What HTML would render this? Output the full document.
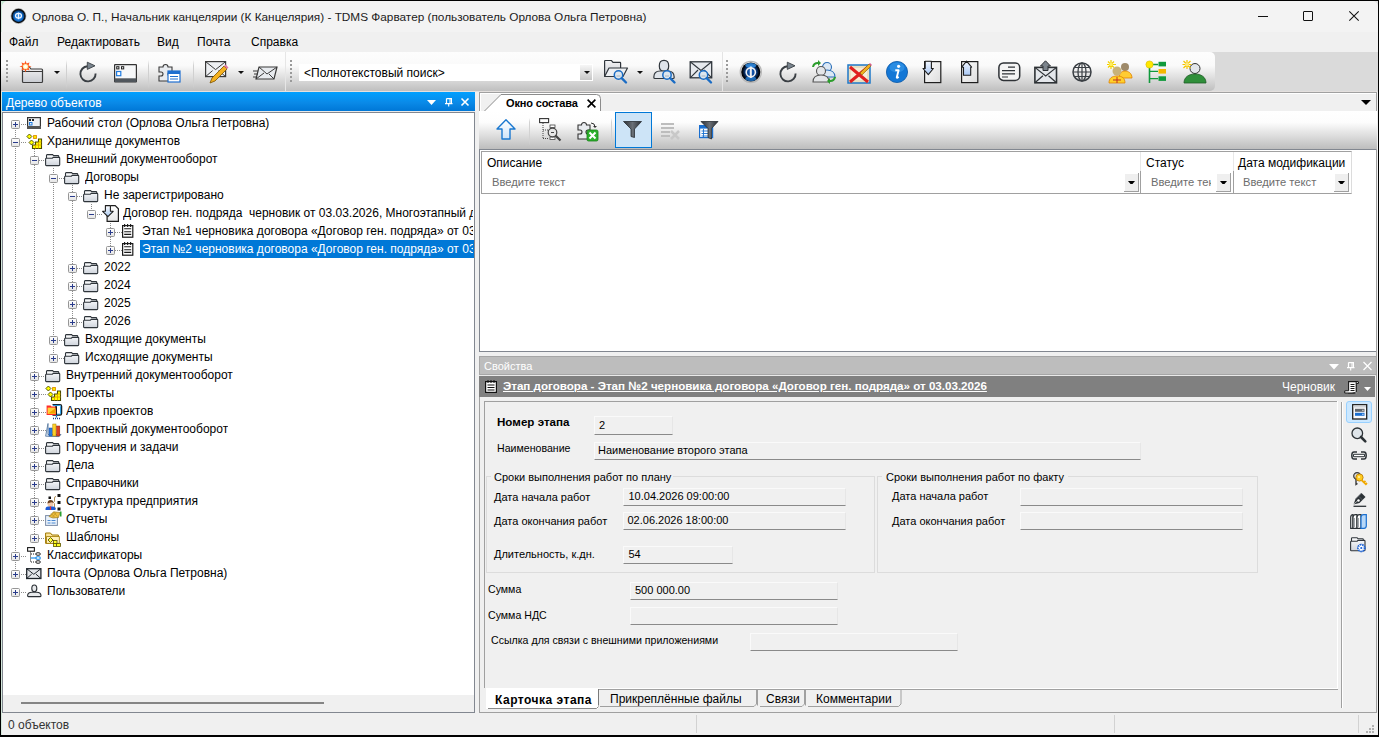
<!DOCTYPE html>
<html><head><meta charset="utf-8"><style>
*{margin:0;padding:0;box-sizing:border-box}
html,body{width:1379px;height:737px;overflow:hidden;background:#000}
body{font-family:"Liberation Sans",sans-serif;font-size:12px;color:#000;position:relative}
.a{position:absolute}
.t{position:absolute;white-space:pre}
svg{position:absolute;overflow:visible}
</style></head><body>
<div class="a" style="left:1px;top:1px;width:1377px;height:734px;background:#e0e0e0"></div>
<div class="a" style="left:1px;top:1px;width:12px;height:12px;background:#c8ead4"></div>
<div class="a" style="left:1px;top:1px;width:1px;height:734px;background:#d5e8dc"></div>
<div class="a" style="left:2px;top:1px;width:1376px;height:734px;background:#f0f0f0;border-radius:6px 6px 0 0"></div>
<div class="a" style="left:2px;top:1px;width:1376px;height:31px;background:#f3f3f3;border-radius:6px 6px 0 0"></div>
<svg style="left:10px;top:8px" width="18" height="18" viewBox="0 0 18 18">
<defs><radialGradient id="gi" cx="50%" cy="55%" r="55%"><stop offset="0" stop-color="#4aa0f0"/><stop offset="0.55" stop-color="#1570d0"/><stop offset="0.85" stop-color="#06305e"/><stop offset="1" stop-color="#000"/></radialGradient></defs>
<circle cx="8.5" cy="8" r="7.4" fill="none" stroke="#a8a8a8" stroke-width="1"/>
<circle cx="8.5" cy="8" r="6.6" fill="url(#gi)" stroke="#0a0a0a" stroke-width="1.2"/>
<ellipse cx="8.5" cy="7.8" rx="3" ry="2.4" fill="none" stroke="#eef4ff" stroke-width="1.2"/>
<line x1="8.5" y1="4.6" x2="8.5" y2="11.2" stroke="#eef4ff" stroke-width="1.2"/>
</svg>
<div class="t" style="left:32px;top:10.10px;font-size:11.8px;line-height:14px;color:#1b1b1b;font-weight:normal;">Орлова О. П., Начальник канцелярии (К Канцелярия) - TDMS Фарватер (пользователь Орлова Ольга Петровна)</div>
<div class="a" style="left:1258px;top:16px;width:10px;height:1px;background:#111"></div>
<div class="a" style="left:1303px;top:11px;width:10px;height:10px;border:1px solid #111;border-radius:1px"></div>
<svg style="left:1349px;top:11px" width="10" height="10" viewBox="0 0 10 10"><path d="M0.3 0.3L9.7 9.7M9.7 0.3L0.3 9.7" stroke="#111" stroke-width="1.05"/></svg>
<div class="a" style="left:1px;top:32px;width:1377px;height:20px;background:#f0f0f0"></div>
<div class="t" style="left:9px;top:34.53px;font-size:12px;line-height:14px;color:#000;font-weight:normal;">Файл</div>
<div class="t" style="left:57px;top:34.53px;font-size:12px;line-height:14px;color:#000;font-weight:normal;">Редактировать</div>
<div class="t" style="left:157px;top:34.53px;font-size:12px;line-height:14px;color:#000;font-weight:normal;">Вид</div>
<div class="t" style="left:197px;top:34.53px;font-size:12px;line-height:14px;color:#000;font-weight:normal;">Почта</div>
<div class="t" style="left:251px;top:34.53px;font-size:12px;line-height:14px;color:#000;font-weight:normal;">Справка</div>
<div class="a" style="left:1px;top:52px;width:1377px;height:40px;background:#dadada"></div>
<div class="a" style="left:1px;top:52px;width:285px;height:39px;background:linear-gradient(#fdfdfd 0%,#fafafa 35%,#e2e2e2 62%,#bfbfbf 100%)"></div>
<div class="a" style="left:285px;top:52px;width:1px;height:39px;background:#e6e6e6"></div>
<div class="a" style="left:286px;top:52px;width:436px;height:39px;background:linear-gradient(#fdfdfd 0%,#fafafa 35%,#e2e2e2 62%,#bfbfbf 100%)"></div>
<div class="a" style="left:722px;top:52px;width:1px;height:39px;background:#e4e4e4"></div>
<div class="a" style="left:723px;top:52px;width:492px;height:39px;background:linear-gradient(#fdfdfd 0%,#fafafa 35%,#e2e2e2 62%,#bfbfbf 100%);border-radius:0 5px 5px 0"></div>
<div class="a" style="left:1px;top:91px;width:1377px;height:1px;background:#e4e0de"></div>
<div class="a" style="left:6px;top:60px;width:2px;height:2px;background:#9a9a9a"></div>
<div class="a" style="left:6px;top:64px;width:2px;height:2px;background:#9a9a9a"></div>
<div class="a" style="left:6px;top:68px;width:2px;height:2px;background:#9a9a9a"></div>
<div class="a" style="left:6px;top:72px;width:2px;height:2px;background:#9a9a9a"></div>
<div class="a" style="left:6px;top:76px;width:2px;height:2px;background:#9a9a9a"></div>
<div class="a" style="left:6px;top:80px;width:2px;height:2px;background:#9a9a9a"></div>
<div class="a" style="left:290px;top:60px;width:2px;height:2px;background:#9a9a9a"></div>
<div class="a" style="left:290px;top:64px;width:2px;height:2px;background:#9a9a9a"></div>
<div class="a" style="left:290px;top:68px;width:2px;height:2px;background:#9a9a9a"></div>
<div class="a" style="left:290px;top:72px;width:2px;height:2px;background:#9a9a9a"></div>
<div class="a" style="left:290px;top:76px;width:2px;height:2px;background:#9a9a9a"></div>
<div class="a" style="left:290px;top:80px;width:2px;height:2px;background:#9a9a9a"></div>
<div class="a" style="left:726px;top:60px;width:2px;height:2px;background:#9a9a9a"></div>
<div class="a" style="left:726px;top:64px;width:2px;height:2px;background:#9a9a9a"></div>
<div class="a" style="left:726px;top:68px;width:2px;height:2px;background:#9a9a9a"></div>
<div class="a" style="left:726px;top:72px;width:2px;height:2px;background:#9a9a9a"></div>
<div class="a" style="left:726px;top:76px;width:2px;height:2px;background:#9a9a9a"></div>
<div class="a" style="left:726px;top:80px;width:2px;height:2px;background:#9a9a9a"></div>
<div class="a" style="left:66px;top:60px;width:1px;height:29px;background:linear-gradient(rgba(0,0,0,0),#d0d0d0 20%,#d0d0d0 80%,rgba(0,0,0,0))"></div>
<div class="a" style="left:148px;top:60px;width:1px;height:29px;background:linear-gradient(rgba(0,0,0,0),#d0d0d0 20%,#d0d0d0 80%,rgba(0,0,0,0))"></div>
<div class="a" style="left:193px;top:60px;width:1px;height:29px;background:linear-gradient(rgba(0,0,0,0),#d0d0d0 20%,#d0d0d0 80%,rgba(0,0,0,0))"></div>
<svg style="left:54px;top:71px" width="6" height="3" viewBox="0 0 6 3"><path d="M0 0H6L3 3Z" fill="#111"/></svg>
<svg style="left:238px;top:71px" width="6" height="3" viewBox="0 0 6 3"><path d="M0 0H6L3 3Z" fill="#111"/></svg>
<svg style="left:637px;top:71px" width="6" height="3" viewBox="0 0 6 3"><path d="M0 0H6L3 3Z" fill="#111"/></svg>
<div class="a" style="left:299px;top:64px;width:294px;height:17px;background:#fff"></div>
<div class="a" style="left:580px;top:65px;width:12px;height:15px;background:linear-gradient(#f6f6f6,#c6c6c6)"></div>
<svg style="left:584px;top:71px" width="6" height="3" viewBox="0 0 6 3"><path d="M0 0H6L3 3Z" fill="#111"/></svg>
<div class="t" style="left:304px;top:66.03px;font-size:12px;line-height:14px;color:#000;font-weight:normal;">&lt;Полнотекстовый поиск&gt;</div>
<svg style="left:0;top:0" width="1" height="1"><defs><linearGradient id="fg" x1="0" y1="0" x2="0" y2="1"><stop offset="0" stop-color="#f4f4f6"/><stop offset="1" stop-color="#c9ccd2"/></linearGradient><linearGradient id="bl" x1="0" y1="0" x2="0" y2="1"><stop offset="0" stop-color="#ffffff"/><stop offset="1" stop-color="#bcd8f5"/></linearGradient></defs></svg>
<svg style="left:19px;top:60px" width="25" height="24" viewBox="0 0 25 24"><path d="M3.5 10.5V21.5Q3.5 22.5 4.5 22.5H22.5Q23.5 22.5 23.5 21.5V10Q23.5 9 22.5 9H12L10 6.5H5Q3.5 6.5 3.5 8z" fill="url(#fg)" stroke="#3c3c3c" stroke-width="1.2"/><path d="M3.5 11.5H23.5" stroke="#3c3c3c" stroke-width="1"/><path d="M6.5 0.5L7.5 3.5 10.5 2.5 9.5 5.5 12.5 6.5 9.5 7.5 10.5 10.5 7.5 9.5 6.5 12.5 5.5 9.5 2.5 10.5 3.5 7.5 0.5 6.5 3.5 5.5 2.5 2.5 5.5 3.5z" fill="#ff5a1e"/><circle cx="6.5" cy="6.5" r="2.6" fill="#fff2b0"/><circle cx="6.5" cy="6.5" r="1.5" fill="#fff"/></svg>
<svg style="left:79px;top:61px" width="19" height="22" viewBox="0 0 19 22"><path d="M16.6 12.5A7.6 7.6 0 1 1 8.5 5.2" fill="none" stroke="#3a3f44" stroke-width="1.9"/><path d="M8.3 1.2L16 4.8L8.3 8.4Z" fill="#7a858f" stroke="#3a3f44" stroke-width="0.9" stroke-linejoin="round"/></svg>
<svg style="left:114px;top:64px" width="23" height="19" viewBox="0 0 23 19"><rect x="0.6" y="0.6" width="21.8" height="17.4" rx="0.5" fill="#f6f7f8" stroke="#333" stroke-width="1.2"/><rect x="0.6" y="14.3" width="21.8" height="3.7" fill="#50565c"/><rect x="2.7" y="2.7" width="2.2" height="2.2" fill="none" stroke="#222" stroke-width="1"/><rect x="7.5" y="2.7" width="2.2" height="2.2" fill="none" stroke="#222" stroke-width="1"/><rect x="2.6" y="7.5" width="4.2" height="4.2" fill="#fff" stroke="#1e7be0" stroke-width="1.2"/></svg>
<svg style="left:158px;top:60px" width="23" height="23" viewBox="0 0 23 23"><path d="M1 7h4a2.5 2.5 0 1 1 5 0h4v5h-2a2 2 0 1 0 0 4h2v5H1v-5h2a2 2 0 1 0 0-4H1z" fill="#e8ebef" stroke="#3a3a3a" stroke-width="1.1"/><rect x="10" y="11" width="12" height="11" fill="#fff" stroke="#1e6fd0" stroke-width="1.2"/><rect x="10" y="11" width="12" height="3" fill="#1e6fd0"/><path d="M12 16.5h8M12 19h8" stroke="#1e6fd0" stroke-width="1"/></svg>
<svg style="left:205px;top:61px" width="24" height="23" viewBox="0 0 24 23"><rect x="0.6" y="0.6" width="20" height="15" fill="#eef0f3" stroke="#3a3a3a" stroke-width="1.2"/><path d="M0.6 0.6l10 8 10-8M0.6 15.6l7-6M20.6 15.6l-7-6" fill="none" stroke="#3a3a3a" stroke-width="1"/><path d="M5 22l2-5 12-12 3 3-12 12z" fill="#f5b120" stroke="#7a5200" stroke-width="0.8"/><path d="M19 5l3 3 1.5-1.5-3-3z" fill="#e07aa0"/></svg>
<svg style="left:253px;top:66px" width="25" height="14" viewBox="0 0 25 14"><path d="M6 1h18l-3 12H3z" fill="#e8ebef" stroke="#3a3a3a" stroke-width="1.2"/><path d="M6 1l8 7 10-7M3 13l8-6M21 13l-5-5" fill="none" stroke="#3a3a3a" stroke-width="1"/><path d="M0 5h5M1 8h4M0 11h4" stroke="#3a3a3a" stroke-width="1"/></svg>
<svg style="left:603px;top:59px" width="26" height="26" viewBox="0 0 26 26"><path d="M1.6 17.5V2.2Q1.6 1.5 2.3 1.5H8.5L10 3.3H17Q17.6 3.3 17.6 4V9" fill="url(#fg)" stroke="#30363c" stroke-width="1.2"/><path d="M1.6 17.5L6 9H24.5L20 17.5Z" fill="#eef0f3" stroke="#30363c" stroke-width="1.2" stroke-linejoin="round"/><circle cx="15.5" cy="16" r="4.2" fill="#dde6ee" stroke="#1a6cc4" stroke-width="1.5"/><path d="M13.5 17h4" stroke="#9aa6b0" stroke-width="0.8"/><path d="M18.7 19.2L23.0 23.5" stroke="#1a6cc4" stroke-width="2.4" stroke-linecap="round"/></svg>
<svg style="left:653px;top:59px" width="25" height="26" viewBox="0 0 25 26"><path d="M6.3 7Q6.3 1.3 11 1.3T15.7 7Q15.7 12.3 11 12.3T6.3 7Z" fill="#dfe4ea" stroke="#30363c" stroke-width="1.2"/><path d="M0.8 18.2Q0.8 12 7 12H15Q21.2 12 21.2 18.2Q21.2 19.5 20 19.5H2Q0.8 19.5 0.8 18.2Z" fill="#dfe4ea" stroke="#30363c" stroke-width="1.2"/><circle cx="14" cy="16" r="4.2" fill="#dde6ee" stroke="#1a6cc4" stroke-width="1.5"/><path d="M12 17h4" stroke="#9aa6b0" stroke-width="0.8"/><path d="M17.2 19.2L21.5 23.5" stroke="#1a6cc4" stroke-width="2.4" stroke-linecap="round"/></svg>
<svg style="left:689px;top:59px" width="26" height="26" viewBox="0 0 26 26"><rect x="1.2" y="2.8" width="21.5" height="16" fill="#e6e9ed" stroke="#30363c" stroke-width="1.3"/><path d="M1.2 2.8L12 11.5 22.7 2.8M1.2 18.8L9 11M22.7 18.8L15 11" fill="none" stroke="#30363c" stroke-width="1.1"/><circle cx="14.5" cy="16" r="4.2" fill="#dde6ee" stroke="#1a6cc4" stroke-width="1.5"/><path d="M12.5 17h4" stroke="#9aa6b0" stroke-width="0.8"/><path d="M17.7 19.2L22.0 23.5" stroke="#1a6cc4" stroke-width="2.4" stroke-linecap="round"/></svg>
<svg style="left:739px;top:60px" width="24" height="24" viewBox="0 0 24 24"><defs><radialGradient id="phg" cx="50%" cy="50%" r="50%"><stop offset="0" stop-color="#1560c0"/><stop offset="0.55" stop-color="#0a3f88"/><stop offset="0.85" stop-color="#010814"/><stop offset="1" stop-color="#000"/></radialGradient></defs><circle cx="11.8" cy="12" r="10.6" fill="none" stroke="#b8b8b8" stroke-width="1.2"/><circle cx="11.8" cy="12" r="9.6" fill="url(#phg)"/><ellipse cx="11.8" cy="5.5" rx="5.5" ry="2.6" fill="#3aa0ff" opacity="0.75"/><ellipse cx="11.8" cy="18.8" rx="5.5" ry="2.4" fill="#2a8ae8" opacity="0.7"/><ellipse cx="11.8" cy="12.3" rx="4.6" ry="4.4" fill="none" stroke="#f0f0f0" stroke-width="1.6"/><path d="M11.8 6.5v11.5" stroke="#f0f0f0" stroke-width="2"/></svg>
<svg style="left:779px;top:61px" width="19" height="22" viewBox="0 0 19 22"><path d="M16.6 12.5A7.6 7.6 0 1 1 8.5 5.2" fill="none" stroke="#3a3f44" stroke-width="1.9"/><path d="M8.3 1.2L16 4.8L8.3 8.4Z" fill="#7a858f" stroke="#3a3f44" stroke-width="0.9" stroke-linejoin="round"/></svg>
<svg style="left:811px;top:60px" width="26" height="24" viewBox="0 0 26 24"><circle cx="16" cy="7" r="4.5" fill="#dbe8f5" stroke="#2a6fb8" stroke-width="1.1"/><path d="M9 17c0-5 3-7 7-7s8 2 8 7z" fill="#dbe8f5" stroke="#2a6fb8" stroke-width="1.1"/><circle cx="10" cy="11" r="4.5" fill="#e4e6e8" stroke="#555" stroke-width="1.1"/><path d="M2 22c0-5 3-7 8-7s8 2 8 7z" fill="#e4e6e8" stroke="#555" stroke-width="1.1"/><path d="M1 7a6 6 0 0 1 6-5v-2l3 3-3 3V4a4 4 0 0 0-4 3z" fill="#2c9d2c"/><path d="M25 17a6 6 0 0 1-6 5v2l-3-3 3-3v2a4 4 0 0 0 4-3z" fill="#2c9d2c"/></svg>
<svg style="left:848px;top:61px" width="24" height="23" viewBox="0 0 24 23"><rect x="0" y="4" width="22" height="18" fill="#e9dfc2" stroke="#1e78c8" stroke-width="1.5"/><rect x="3" y="7" width="16" height="12" fill="#f5eed8"/><path d="M2 6l18 15M20 6L2 21" stroke="#e02020" stroke-width="3"/><path d="M12 12l9-9 2 2-9 9z" fill="#f0b020" stroke="#8a6000" stroke-width="0.6"/><path d="M21 3l2 2 1-1-2-2z" fill="#d85a8a"/></svg>
<svg style="left:886px;top:60px" width="23" height="24" viewBox="0 0 23 24"><circle cx="11" cy="12" r="10.6" fill="#1377d6" stroke="#0d5aa8" stroke-width="0.8"/><ellipse cx="11" cy="7.5" rx="7.5" ry="5" fill="#4aa8f5" opacity="0.45"/><circle cx="12.6" cy="6.3" r="1.6" fill="#fff"/><path d="M9.3 10.2H12.6L10.8 17.2Q10.6 18 11.5 17.6L12.8 17" fill="none" stroke="#fff" stroke-width="1.9" stroke-linejoin="round"/></svg>
<svg style="left:922px;top:60px" width="20" height="24" viewBox="0 0 20 24"><defs><linearGradient id="dg" x1="0" y1="0" x2="1" y2="1"><stop offset="0" stop-color="#fff"/><stop offset="1" stop-color="#dcdcdc"/></linearGradient><linearGradient id="ag" x1="0" y1="0" x2="0" y2="1"><stop offset="0" stop-color="#f4f8ff"/><stop offset="1" stop-color="#a9c8f5"/></linearGradient></defs><rect x="2.6" y="1.6" width="16.2" height="21" fill="url(#dg)" stroke="#1e1e1e" stroke-width="1.2"/><path d="M3.2 1.2H9.4V8.5H11.4L6.3 14.6 1 8.5H3.2Z" fill="url(#ag)" stroke="#1e1e1e" stroke-width="1.1" stroke-linejoin="round"/></svg>
<svg style="left:960px;top:60px" width="20" height="24" viewBox="0 0 20 24"><rect x="1.6" y="1.6" width="16.2" height="21" fill="url(#dg)" stroke="#1e1e1e" stroke-width="1.2"/><path d="M3.5 15.3V7.2H1.6L6.6 1.2 11.6 7.2H10.7V15.3Z" fill="url(#ag)" stroke="#1e1e1e" stroke-width="1.1" stroke-linejoin="round"/></svg>
<svg style="left:998px;top:62px" width="22" height="20" viewBox="0 0 22 20"><rect x="0.9" y="1" width="20.8" height="17.4" rx="4.5" fill="#f4f4f4" stroke="#2e3236" stroke-width="1.5"/><path d="M10 5.2h7M4 8.7h13M4 11.8h13M4 15h6" stroke="#2e3236" stroke-width="1.2"/></svg>
<svg style="left:1034px;top:60px" width="24" height="24" viewBox="0 0 24 24"><rect x="0.9" y="7.4" width="21.6" height="15.4" fill="#e4e7eb" stroke="#2e3236" stroke-width="1.6"/><path d="M0.9 7.4l10.8 8.6 10.8-8.6M0.9 22.8l8-7M22.5 22.8l-8-7" fill="none" stroke="#2e3236" stroke-width="1.2"/><path d="M9 10.5V6H6.5L11.5 0.8 16.5 6H14V10.5Z" fill="#7c848c" stroke="#2e3236" stroke-width="1" stroke-linejoin="round"/></svg>
<svg style="left:1072px;top:62px" width="21" height="20" viewBox="0 0 21 20"><circle cx="10" cy="10" r="9" fill="none" stroke="#3a3f44" stroke-width="1.5"/><ellipse cx="10" cy="10" rx="4" ry="9" fill="none" stroke="#3a3f44" stroke-width="1.3"/><path d="M1 10h18M2.5 5.5h15M2.5 14.5h15M10 1v18" stroke="#3a3f44" stroke-width="1.2"/></svg>
<svg style="left:1107px;top:60px" width="26" height="24" viewBox="0 0 26 24"><circle cx="18" cy="7" r="4" fill="#9e8a6a"/><path d="M12 18c0-5 3-7 6-7s7 2 7 7z" fill="#ffcc33" stroke="#e08000" stroke-width="0.8"/><circle cx="10" cy="11" r="4.5" fill="#c8b27a"/><path d="M2 23c0-5 3-7 8-7s8 2 8 7z" fill="#ffd02a" stroke="#e08000" stroke-width="0.8"/><path d="M4 0v9M0 4.5h9M1 1.5l6 6M7 1.5l-6 6" stroke="#f3d000" stroke-width="1.2"/><circle cx="4" cy="4.5" r="1.8" fill="#ffee60"/><path d="M10 17v6M6 20h8" stroke="#c03020" stroke-width="1"/></svg>
<svg style="left:1145px;top:60px" width="22" height="24" viewBox="0 0 22 24"><path d="M4.5 4.5V23" stroke="#119a3c" stroke-width="1.6"/><path d="M4.5 4.5H13M4.5 11.3H13M4.5 18.6H13" stroke="#119a3c" stroke-width="1.3"/><circle cx="4.5" cy="4.5" r="3.6" fill="#ffe800" stroke="#d8b800" stroke-width="0.6"/><rect x="13.5" y="1.8" width="7.5" height="4.6" fill="#119a3c"/><rect x="13.5" y="9" width="7.5" height="4.6" fill="#f5b800"/><rect x="13.5" y="16.3" width="7.5" height="4.6" fill="#119a3c"/></svg>
<svg style="left:1182px;top:60px" width="25" height="24" viewBox="0 0 25 24"><circle cx="13" cy="8.5" r="5" fill="#e2e6ea" stroke="#333" stroke-width="1"/><path d="M2 23c0-6 5-9 11-9s11 3 11 9z" fill="#2f8f3a" stroke="#1d5a24" stroke-width="0.8"/><path d="M5 0v9M0.5 4.5h9M1.5 1l7 7M8.5 1l-7 7" stroke="#f3c400" stroke-width="1.2"/><circle cx="5" cy="4.5" r="2" fill="#ffe97a"/></svg>
<div class="t" style="left:8px;top:717.73px;font-size:12px;line-height:14px;color:#333;font-weight:normal;">0 объектов</div>
<div class="a" style="left:0px;top:735px;width:1379px;height:2px;background:#000"></div>
<div class="a" style="left:2px;top:92px;width:473px;height:19px;background:linear-gradient(#00a0ff,#0a8ae8 55%,#0077d6)"></div>
<div class="a" style="left:2px;top:111px;width:473px;height:1px;background:#e9e9e9"></div>
<div class="t" style="left:6px;top:96.03px;font-size:12px;line-height:14px;color:#fff;font-weight:normal;">Дерево объектов</div>
<svg style="left:427px;top:100px" width="9" height="5" viewBox="0 0 9 5"><path d="M0 0H9L4.5 5Z" fill="#fff"/></svg>
<svg style="left:445px;top:98px" width="8" height="9" viewBox="0 0 8 9"><path d="M1.5 0.6H6.4V5M1.5 0.6V5" stroke="#fff" stroke-width="1.2" fill="none"/><path d="M5 0.6V5" stroke="#fff" stroke-width="1" fill="none"/><path d="M0 5.6H7.5M3.7 5.6V8.5" stroke="#fff" stroke-width="1.1" fill="none"/></svg>
<svg style="left:461px;top:98px" width="8" height="8" viewBox="0 0 8 8"><path d="M0.5 0.5L7.5 7.5M7.5 0.5L0.5 7.5" stroke="#fff" stroke-width="1.6"/></svg>
<div class="a" style="left:2px;top:112px;width:473px;height:601px;background:#fff;border:1px solid #828790"></div>
<div class="a" style="left:3px;top:695px;width:471px;height:17px;background:#f0f0f0"></div>
<div class="a" style="left:21px;top:702px;width:303px;height:2px;background:#858585"></div>
<svg style="left:0;top:0" width="1379" height="737"><g stroke="#8c8c8c" stroke-width="1" stroke-dasharray="1 1" fill="none"><path d="M15.5 130V574"/><path d="M34.5 149V538"/><path d="M53.5 168V358"/><path d="M72.5 185V322"/><path d="M91.5 204V214"/><path d="M110.5 221V250"/><path d="M21 124.5H27"/><path d="M21 142.5H27"/><path d="M39 160.5H46"/><path d="M59 178.5H65"/><path d="M77 196.5H84"/><path d="M97 214.5H103"/><path d="M115 232.5H122"/><path d="M115 250.5H122"/><path d="M77 268.5H84"/><path d="M77 286.5H84"/><path d="M77 304.5H84"/><path d="M77 322.5H84"/><path d="M59 340.5H65"/><path d="M59 358.5H65"/><path d="M39 376.5H46"/><path d="M39 394.5H46"/><path d="M39 412.5H46"/><path d="M39 430.5H46"/><path d="M39 448.5H46"/><path d="M39 466.5H46"/><path d="M39 484.5H46"/><path d="M39 502.5H46"/><path d="M39 520.5H46"/><path d="M39 538.5H46"/><path d="M21 556.5H27"/><path d="M21 574.5H27"/><path d="M21 592.5H27"/></g></svg>
<svg style="left:0;top:0" width="1" height="1"><defs><linearGradient id="tfg" x1="0" y1="0" x2="0" y2="1"><stop offset="0" stop-color="#f4f6f9"/><stop offset="1" stop-color="#cfd4dc"/></linearGradient></defs></svg>
<svg style="left:11px;top:120px" width="9" height="9" viewBox="0 0 9 9"><defs></defs><rect x="0.5" y="0.5" width="8" height="8" fill="url(#exg)" stroke="#969696" rx="1"/><path d="M2 4.5h5" stroke="#2a3c8c" stroke-width="1"/><path d="M4.5 2v5" stroke="#2a3c8c" stroke-width="1"/></svg>
<svg style="left:27px;top:117px" width="14" height="12" viewBox="0 0 14 12"><rect x="0.6" y="0.6" width="12.8" height="10.8" fill="#eef0f3" stroke="#333" stroke-width="1.2"/><rect x="0" y="9" width="14" height="3" fill="#555"/><rect x="2" y="2" width="2" height="2" fill="#222"/><rect x="5" y="2" width="2" height="2" fill="#222"/><rect x="2.5" y="5.5" width="2.5" height="2.5" fill="none" stroke="#1e7be0" stroke-width="1"/></svg>
<div class="t" style="left:47px;top:116.23px;font-size:12px;line-height:14px;color:#000;font-weight:normal;max-width:426px;overflow:hidden">Рабочий стол (Орлова Ольга Петровна)</div>
<svg style="left:11px;top:138px" width="9" height="9" viewBox="0 0 9 9"><defs></defs><rect x="0.5" y="0.5" width="8" height="8" fill="url(#exg)" stroke="#969696" rx="1"/><path d="M2 4.5h5" stroke="#2a3c8c" stroke-width="1"/></svg>
<svg style="left:24px;top:132px" width="20" height="18" viewBox="0 0 20 18"><path d="M8.5 16.5V13H11.5V10H14.5V7H17.5V16.5Z" fill="#ffff00" stroke="#4a4a00" stroke-width="1.1"/><path d="M11.5 13V16.5M14.5 10V16.5M11.5 13H17.5M14.5 10H17.5" stroke="#e0a000" stroke-width="0.9"/><path d="M5.4 2L7.9 4.5 5.4 7 2.9 4.5Z" fill="#ffff00" stroke="#4a4a00" stroke-width="0.9"/><path d="M7.5 8L10 10.5 7.5 13 5 10.5Z" fill="#ffff00" stroke="#4a4a00" stroke-width="0.9"/><rect x="9.6" y="3.6" width="2.8" height="2.8" fill="#ffff00" stroke="#e09000" stroke-width="1"/></svg>
<div class="t" style="left:47px;top:134.23px;font-size:12px;line-height:14px;color:#000;font-weight:normal;max-width:426px;overflow:hidden">Хранилище документов</div>
<svg style="left:30px;top:156px" width="9" height="9" viewBox="0 0 9 9"><defs></defs><rect x="0.5" y="0.5" width="8" height="8" fill="url(#exg)" stroke="#969696" rx="1"/><path d="M2 4.5h5" stroke="#2a3c8c" stroke-width="1"/></svg>
<svg style="left:45px;top:154px" width="16" height="13" viewBox="0 0 16 13"><path d="M1.5 4V1.3Q1.5 0.6 2.2 0.6H7.6L8.6 1.6H13Q13.7 1.6 13.7 2.3V4" fill="#f6f7f9" stroke="#2f353b" stroke-width="1.1"/><path d="M0.6 10.8V5Q0.6 4.2 1.4 4.2H7.4L8.2 3.4H14Q14.7 3.4 14.7 4.1V10.8Q14.7 11.6 13.9 11.6H1.4Q0.6 11.6 0.6 10.8Z" fill="url(#tfg)" stroke="#2f353b" stroke-width="1.1"/></svg>
<div class="t" style="left:66px;top:152.23px;font-size:12px;line-height:14px;color:#000;font-weight:normal;max-width:407px;overflow:hidden">Внешний документооборот</div>
<svg style="left:49px;top:174px" width="9" height="9" viewBox="0 0 9 9"><defs></defs><rect x="0.5" y="0.5" width="8" height="8" fill="url(#exg)" stroke="#969696" rx="1"/><path d="M2 4.5h5" stroke="#2a3c8c" stroke-width="1"/></svg>
<svg style="left:64px;top:172px" width="16" height="13" viewBox="0 0 16 13"><path d="M1.5 4V1.3Q1.5 0.6 2.2 0.6H7.6L8.6 1.6H13Q13.7 1.6 13.7 2.3V4" fill="#f6f7f9" stroke="#2f353b" stroke-width="1.1"/><path d="M0.6 10.8V5Q0.6 4.2 1.4 4.2H7.4L8.2 3.4H14Q14.7 3.4 14.7 4.1V10.8Q14.7 11.6 13.9 11.6H1.4Q0.6 11.6 0.6 10.8Z" fill="url(#tfg)" stroke="#2f353b" stroke-width="1.1"/></svg>
<div class="t" style="left:85px;top:170.23px;font-size:12px;line-height:14px;color:#000;font-weight:normal;max-width:388px;overflow:hidden">Договоры</div>
<svg style="left:68px;top:192px" width="9" height="9" viewBox="0 0 9 9"><defs></defs><rect x="0.5" y="0.5" width="8" height="8" fill="url(#exg)" stroke="#969696" rx="1"/><path d="M2 4.5h5" stroke="#2a3c8c" stroke-width="1"/></svg>
<svg style="left:83px;top:190px" width="16" height="13" viewBox="0 0 16 13"><path d="M1.5 4V1.3Q1.5 0.6 2.2 0.6H7.6L8.6 1.6H13Q13.7 1.6 13.7 2.3V4" fill="#f6f7f9" stroke="#2f353b" stroke-width="1.1"/><path d="M0.6 10.8V5Q0.6 4.2 1.4 4.2H7.4L8.2 3.4H14Q14.7 3.4 14.7 4.1V10.8Q14.7 11.6 13.9 11.6H1.4Q0.6 11.6 0.6 10.8Z" fill="url(#tfg)" stroke="#2f353b" stroke-width="1.1"/></svg>
<div class="t" style="left:104px;top:188.23px;font-size:12px;line-height:14px;color:#000;font-weight:normal;max-width:369px;overflow:hidden">Не зарегистрировано</div>
<svg style="left:87px;top:210px" width="9" height="9" viewBox="0 0 9 9"><defs></defs><rect x="0.5" y="0.5" width="8" height="8" fill="url(#exg)" stroke="#969696" rx="1"/><path d="M2 4.5h5" stroke="#2a3c8c" stroke-width="1"/></svg>
<svg style="left:102px;top:205px" width="18" height="18" viewBox="0 0 18 18"><defs><linearGradient id="dd1" x1="0" y1="0" x2="0" y2="1"><stop offset="0" stop-color="#fff"/><stop offset="1" stop-color="#e6e6e6"/></linearGradient><linearGradient id="dd2" x1="0" y1="0" x2="0" y2="1"><stop offset="0" stop-color="#fff"/><stop offset="1" stop-color="#a8c8f0"/></linearGradient></defs><path d="M8.5 0.6H13.2L16.4 3.8V16.4H5.1V7" fill="url(#dd1)" stroke="#1e1e1e" stroke-width="1.2"/><path d="M3.4 0.6H8.4V6.3H11.2L5.9 11.6 0.6 6.3H3.4Z" fill="url(#dd2)" stroke="#1e1e1e" stroke-width="1.1" stroke-linejoin="round"/></svg>
<div class="t" style="left:123px;top:206.23px;font-size:12px;line-height:14px;color:#000;font-weight:normal;max-width:350px;overflow:hidden">Договор ген. подряда  черновик от 03.03.2026, Многоэтапный договор</div>
<svg style="left:106px;top:228px" width="9" height="9" viewBox="0 0 9 9"><defs></defs><rect x="0.5" y="0.5" width="8" height="8" fill="url(#exg)" stroke="#969696" rx="1"/><path d="M2 4.5h5" stroke="#2a3c8c" stroke-width="1"/><path d="M4.5 2v5" stroke="#2a3c8c" stroke-width="1"/></svg>
<svg style="left:122px;top:224px" width="12" height="14" viewBox="0 0 12 14"><rect x="0.6" y="1.6" width="10.2" height="11.6" fill="#fff" stroke="#1a1a1a" stroke-width="1.2"/><path d="M2.6 0v3M5.6 0v3M8.6 0v3" stroke="#1a1a1a" stroke-width="1.1"/><path d="M2.2 4.7h7M2.2 7.7h7M2.2 10.4h7" stroke="#1a1a1a" stroke-width="1.1"/></svg>
<div class="t" style="left:142px;top:224.23px;font-size:12px;line-height:14px;color:#000;font-weight:normal;max-width:331px;overflow:hidden">Этап №1 черновика договора «Договор ген. подряда» от 03.03.2026</div>
<svg style="left:106px;top:246px" width="9" height="9" viewBox="0 0 9 9"><defs></defs><rect x="0.5" y="0.5" width="8" height="8" fill="url(#exg)" stroke="#969696" rx="1"/><path d="M2 4.5h5" stroke="#2a3c8c" stroke-width="1"/><path d="M4.5 2v5" stroke="#2a3c8c" stroke-width="1"/></svg>
<svg style="left:122px;top:242px" width="12" height="14" viewBox="0 0 12 14"><rect x="0.6" y="1.6" width="10.2" height="11.6" fill="#fff" stroke="#1a1a1a" stroke-width="1.2"/><path d="M2.6 0v3M5.6 0v3M8.6 0v3" stroke="#1a1a1a" stroke-width="1.1"/><path d="M2.2 4.7h7M2.2 7.7h7M2.2 10.4h7" stroke="#1a1a1a" stroke-width="1.1"/></svg>
<div class="a" style="left:140px;top:240px;width:334px;height:18px;background:#0078d7"></div>
<div class="t" style="left:142px;top:242.23px;font-size:12px;line-height:14px;color:#fff;font-weight:normal;max-width:331px;overflow:hidden">Этап №2 черновика договора «Договор ген. подряда» от 03.03.2026</div>
<svg style="left:68px;top:264px" width="9" height="9" viewBox="0 0 9 9"><defs></defs><rect x="0.5" y="0.5" width="8" height="8" fill="url(#exg)" stroke="#969696" rx="1"/><path d="M2 4.5h5" stroke="#2a3c8c" stroke-width="1"/><path d="M4.5 2v5" stroke="#2a3c8c" stroke-width="1"/></svg>
<svg style="left:83px;top:262px" width="16" height="13" viewBox="0 0 16 13"><path d="M1.5 4V1.3Q1.5 0.6 2.2 0.6H7.6L8.6 1.6H13Q13.7 1.6 13.7 2.3V4" fill="#f6f7f9" stroke="#2f353b" stroke-width="1.1"/><path d="M0.6 10.8V5Q0.6 4.2 1.4 4.2H7.4L8.2 3.4H14Q14.7 3.4 14.7 4.1V10.8Q14.7 11.6 13.9 11.6H1.4Q0.6 11.6 0.6 10.8Z" fill="url(#tfg)" stroke="#2f353b" stroke-width="1.1"/></svg>
<div class="t" style="left:104px;top:260.23px;font-size:12px;line-height:14px;color:#000;font-weight:normal;max-width:369px;overflow:hidden">2022</div>
<svg style="left:68px;top:282px" width="9" height="9" viewBox="0 0 9 9"><defs></defs><rect x="0.5" y="0.5" width="8" height="8" fill="url(#exg)" stroke="#969696" rx="1"/><path d="M2 4.5h5" stroke="#2a3c8c" stroke-width="1"/><path d="M4.5 2v5" stroke="#2a3c8c" stroke-width="1"/></svg>
<svg style="left:83px;top:280px" width="16" height="13" viewBox="0 0 16 13"><path d="M1.5 4V1.3Q1.5 0.6 2.2 0.6H7.6L8.6 1.6H13Q13.7 1.6 13.7 2.3V4" fill="#f6f7f9" stroke="#2f353b" stroke-width="1.1"/><path d="M0.6 10.8V5Q0.6 4.2 1.4 4.2H7.4L8.2 3.4H14Q14.7 3.4 14.7 4.1V10.8Q14.7 11.6 13.9 11.6H1.4Q0.6 11.6 0.6 10.8Z" fill="url(#tfg)" stroke="#2f353b" stroke-width="1.1"/></svg>
<div class="t" style="left:104px;top:278.23px;font-size:12px;line-height:14px;color:#000;font-weight:normal;max-width:369px;overflow:hidden">2024</div>
<svg style="left:68px;top:300px" width="9" height="9" viewBox="0 0 9 9"><defs></defs><rect x="0.5" y="0.5" width="8" height="8" fill="url(#exg)" stroke="#969696" rx="1"/><path d="M2 4.5h5" stroke="#2a3c8c" stroke-width="1"/><path d="M4.5 2v5" stroke="#2a3c8c" stroke-width="1"/></svg>
<svg style="left:83px;top:298px" width="16" height="13" viewBox="0 0 16 13"><path d="M1.5 4V1.3Q1.5 0.6 2.2 0.6H7.6L8.6 1.6H13Q13.7 1.6 13.7 2.3V4" fill="#f6f7f9" stroke="#2f353b" stroke-width="1.1"/><path d="M0.6 10.8V5Q0.6 4.2 1.4 4.2H7.4L8.2 3.4H14Q14.7 3.4 14.7 4.1V10.8Q14.7 11.6 13.9 11.6H1.4Q0.6 11.6 0.6 10.8Z" fill="url(#tfg)" stroke="#2f353b" stroke-width="1.1"/></svg>
<div class="t" style="left:104px;top:296.23px;font-size:12px;line-height:14px;color:#000;font-weight:normal;max-width:369px;overflow:hidden">2025</div>
<svg style="left:68px;top:318px" width="9" height="9" viewBox="0 0 9 9"><defs></defs><rect x="0.5" y="0.5" width="8" height="8" fill="url(#exg)" stroke="#969696" rx="1"/><path d="M2 4.5h5" stroke="#2a3c8c" stroke-width="1"/><path d="M4.5 2v5" stroke="#2a3c8c" stroke-width="1"/></svg>
<svg style="left:83px;top:316px" width="16" height="13" viewBox="0 0 16 13"><path d="M1.5 4V1.3Q1.5 0.6 2.2 0.6H7.6L8.6 1.6H13Q13.7 1.6 13.7 2.3V4" fill="#f6f7f9" stroke="#2f353b" stroke-width="1.1"/><path d="M0.6 10.8V5Q0.6 4.2 1.4 4.2H7.4L8.2 3.4H14Q14.7 3.4 14.7 4.1V10.8Q14.7 11.6 13.9 11.6H1.4Q0.6 11.6 0.6 10.8Z" fill="url(#tfg)" stroke="#2f353b" stroke-width="1.1"/></svg>
<div class="t" style="left:104px;top:314.23px;font-size:12px;line-height:14px;color:#000;font-weight:normal;max-width:369px;overflow:hidden">2026</div>
<svg style="left:49px;top:336px" width="9" height="9" viewBox="0 0 9 9"><defs></defs><rect x="0.5" y="0.5" width="8" height="8" fill="url(#exg)" stroke="#969696" rx="1"/><path d="M2 4.5h5" stroke="#2a3c8c" stroke-width="1"/><path d="M4.5 2v5" stroke="#2a3c8c" stroke-width="1"/></svg>
<svg style="left:64px;top:334px" width="16" height="13" viewBox="0 0 16 13"><path d="M1.5 4V1.3Q1.5 0.6 2.2 0.6H7.6L8.6 1.6H13Q13.7 1.6 13.7 2.3V4" fill="#f6f7f9" stroke="#2f353b" stroke-width="1.1"/><path d="M0.6 10.8V5Q0.6 4.2 1.4 4.2H7.4L8.2 3.4H14Q14.7 3.4 14.7 4.1V10.8Q14.7 11.6 13.9 11.6H1.4Q0.6 11.6 0.6 10.8Z" fill="url(#tfg)" stroke="#2f353b" stroke-width="1.1"/></svg>
<div class="t" style="left:85px;top:332.23px;font-size:12px;line-height:14px;color:#000;font-weight:normal;max-width:388px;overflow:hidden">Входящие документы</div>
<svg style="left:49px;top:354px" width="9" height="9" viewBox="0 0 9 9"><defs></defs><rect x="0.5" y="0.5" width="8" height="8" fill="url(#exg)" stroke="#969696" rx="1"/><path d="M2 4.5h5" stroke="#2a3c8c" stroke-width="1"/><path d="M4.5 2v5" stroke="#2a3c8c" stroke-width="1"/></svg>
<svg style="left:64px;top:352px" width="16" height="13" viewBox="0 0 16 13"><path d="M1.5 4V1.3Q1.5 0.6 2.2 0.6H7.6L8.6 1.6H13Q13.7 1.6 13.7 2.3V4" fill="#f6f7f9" stroke="#2f353b" stroke-width="1.1"/><path d="M0.6 10.8V5Q0.6 4.2 1.4 4.2H7.4L8.2 3.4H14Q14.7 3.4 14.7 4.1V10.8Q14.7 11.6 13.9 11.6H1.4Q0.6 11.6 0.6 10.8Z" fill="url(#tfg)" stroke="#2f353b" stroke-width="1.1"/></svg>
<div class="t" style="left:85px;top:350.23px;font-size:12px;line-height:14px;color:#000;font-weight:normal;max-width:388px;overflow:hidden">Исходящие документы</div>
<svg style="left:30px;top:372px" width="9" height="9" viewBox="0 0 9 9"><defs></defs><rect x="0.5" y="0.5" width="8" height="8" fill="url(#exg)" stroke="#969696" rx="1"/><path d="M2 4.5h5" stroke="#2a3c8c" stroke-width="1"/><path d="M4.5 2v5" stroke="#2a3c8c" stroke-width="1"/></svg>
<svg style="left:45px;top:370px" width="16" height="13" viewBox="0 0 16 13"><path d="M1.5 4V1.3Q1.5 0.6 2.2 0.6H7.6L8.6 1.6H13Q13.7 1.6 13.7 2.3V4" fill="#f6f7f9" stroke="#2f353b" stroke-width="1.1"/><path d="M0.6 10.8V5Q0.6 4.2 1.4 4.2H7.4L8.2 3.4H14Q14.7 3.4 14.7 4.1V10.8Q14.7 11.6 13.9 11.6H1.4Q0.6 11.6 0.6 10.8Z" fill="url(#tfg)" stroke="#2f353b" stroke-width="1.1"/></svg>
<div class="t" style="left:66px;top:368.23px;font-size:12px;line-height:14px;color:#000;font-weight:normal;max-width:407px;overflow:hidden">Внутренний документооборот</div>
<svg style="left:30px;top:390px" width="9" height="9" viewBox="0 0 9 9"><defs></defs><rect x="0.5" y="0.5" width="8" height="8" fill="url(#exg)" stroke="#969696" rx="1"/><path d="M2 4.5h5" stroke="#2a3c8c" stroke-width="1"/><path d="M4.5 2v5" stroke="#2a3c8c" stroke-width="1"/></svg>
<svg style="left:43px;top:384px" width="20" height="18" viewBox="0 0 20 18"><path d="M8.5 16.5V13H11.5V10H14.5V7H17.5V16.5Z" fill="#ffff00" stroke="#4a4a00" stroke-width="1.1"/><path d="M11.5 13V16.5M14.5 10V16.5M11.5 13H17.5M14.5 10H17.5" stroke="#e0a000" stroke-width="0.9"/><path d="M5.4 2L7.9 4.5 5.4 7 2.9 4.5Z" fill="#ffff00" stroke="#4a4a00" stroke-width="0.9"/><path d="M7.5 8L10 10.5 7.5 13 5 10.5Z" fill="#ffff00" stroke="#4a4a00" stroke-width="0.9"/><rect x="9.6" y="3.6" width="2.8" height="2.8" fill="#ffff00" stroke="#e09000" stroke-width="1"/></svg>
<div class="t" style="left:66px;top:386.23px;font-size:12px;line-height:14px;color:#000;font-weight:normal;max-width:407px;overflow:hidden">Проекты</div>
<svg style="left:30px;top:408px" width="9" height="9" viewBox="0 0 9 9"><defs></defs><rect x="0.5" y="0.5" width="8" height="8" fill="url(#exg)" stroke="#969696" rx="1"/><path d="M2 4.5h5" stroke="#2a3c8c" stroke-width="1"/><path d="M4.5 2v5" stroke="#2a3c8c" stroke-width="1"/></svg>
<svg style="left:46px;top:403px" width="17" height="17" viewBox="0 0 17 17"><path d="M6.5 1.6H14Q15.6 1.6 15.6 3.2V10.4Q15.6 12 14 12H6.5" fill="#fff" stroke="#12181e" stroke-width="1.3"/><path d="M7 2.4H13.6Q14.6 2.4 14.6 3.4V10.2Q14.6 11.2 13.6 11.2H7" fill="none" stroke="#1a9ae8" stroke-width="1"/><path d="M10.5 12v2.5" stroke="#1a6fd0" stroke-width="1.2"/><path d="M7 15.5h8" stroke="#1a3a8a" stroke-width="1.4" stroke-dasharray="1 1"/><path d="M0.6 2.6H4.5L5.5 3.6H10.5V12H0.6Z" fill="#ff2a2a"/><rect x="1.6" y="4.6" width="8" height="6.4" fill="#ffd23a"/><path d="M2 10.5L9 5.5V10.5Z" fill="#f0a000"/><path d="M9.5 3.5h1v8.5" stroke="#1a1a1a" stroke-width="1"/></svg>
<div class="t" style="left:66px;top:404.23px;font-size:12px;line-height:14px;color:#000;font-weight:normal;max-width:407px;overflow:hidden">Архив проектов</div>
<svg style="left:30px;top:426px" width="9" height="9" viewBox="0 0 9 9"><defs></defs><rect x="0.5" y="0.5" width="8" height="8" fill="url(#exg)" stroke="#969696" rx="1"/><path d="M2 4.5h5" stroke="#2a3c8c" stroke-width="1"/><path d="M4.5 2v5" stroke="#2a3c8c" stroke-width="1"/></svg>
<svg style="left:45px;top:422px" width="17" height="16" viewBox="0 0 17 16"><path d="M0.6 14.2L3 1.5V12.5H16L14 14.6Z" fill="#dfe9f5" stroke="#5a7aa0" stroke-width="0.9"/><rect x="4" y="6" width="3.2" height="8" fill="#2a7ae0" stroke="#1a4a90" stroke-width="0.5"/><rect x="7.8" y="2" width="3.2" height="12" fill="#ffd02a" stroke="#a08000" stroke-width="0.5"/><rect x="11.6" y="4" width="3.2" height="10" fill="#e04020" stroke="#902010" stroke-width="0.5"/></svg>
<div class="t" style="left:66px;top:422.23px;font-size:12px;line-height:14px;color:#000;font-weight:normal;max-width:407px;overflow:hidden">Проектный документооборот</div>
<svg style="left:30px;top:444px" width="9" height="9" viewBox="0 0 9 9"><defs></defs><rect x="0.5" y="0.5" width="8" height="8" fill="url(#exg)" stroke="#969696" rx="1"/><path d="M2 4.5h5" stroke="#2a3c8c" stroke-width="1"/><path d="M4.5 2v5" stroke="#2a3c8c" stroke-width="1"/></svg>
<svg style="left:45px;top:442px" width="16" height="13" viewBox="0 0 16 13"><path d="M1.5 4V1.3Q1.5 0.6 2.2 0.6H7.6L8.6 1.6H13Q13.7 1.6 13.7 2.3V4" fill="#f6f7f9" stroke="#2f353b" stroke-width="1.1"/><path d="M0.6 10.8V5Q0.6 4.2 1.4 4.2H7.4L8.2 3.4H14Q14.7 3.4 14.7 4.1V10.8Q14.7 11.6 13.9 11.6H1.4Q0.6 11.6 0.6 10.8Z" fill="url(#tfg)" stroke="#2f353b" stroke-width="1.1"/></svg>
<div class="t" style="left:66px;top:440.23px;font-size:12px;line-height:14px;color:#000;font-weight:normal;max-width:407px;overflow:hidden">Поручения и задачи</div>
<svg style="left:30px;top:462px" width="9" height="9" viewBox="0 0 9 9"><defs></defs><rect x="0.5" y="0.5" width="8" height="8" fill="url(#exg)" stroke="#969696" rx="1"/><path d="M2 4.5h5" stroke="#2a3c8c" stroke-width="1"/><path d="M4.5 2v5" stroke="#2a3c8c" stroke-width="1"/></svg>
<svg style="left:45px;top:460px" width="16" height="13" viewBox="0 0 16 13"><path d="M1.5 4V1.3Q1.5 0.6 2.2 0.6H7.6L8.6 1.6H13Q13.7 1.6 13.7 2.3V4" fill="#f6f7f9" stroke="#2f353b" stroke-width="1.1"/><path d="M0.6 10.8V5Q0.6 4.2 1.4 4.2H7.4L8.2 3.4H14Q14.7 3.4 14.7 4.1V10.8Q14.7 11.6 13.9 11.6H1.4Q0.6 11.6 0.6 10.8Z" fill="url(#tfg)" stroke="#2f353b" stroke-width="1.1"/></svg>
<div class="t" style="left:66px;top:458.23px;font-size:12px;line-height:14px;color:#000;font-weight:normal;max-width:407px;overflow:hidden">Дела</div>
<svg style="left:30px;top:480px" width="9" height="9" viewBox="0 0 9 9"><defs></defs><rect x="0.5" y="0.5" width="8" height="8" fill="url(#exg)" stroke="#969696" rx="1"/><path d="M2 4.5h5" stroke="#2a3c8c" stroke-width="1"/><path d="M4.5 2v5" stroke="#2a3c8c" stroke-width="1"/></svg>
<svg style="left:45px;top:478px" width="16" height="13" viewBox="0 0 16 13"><path d="M1.5 4V1.3Q1.5 0.6 2.2 0.6H7.6L8.6 1.6H13Q13.7 1.6 13.7 2.3V4" fill="#f6f7f9" stroke="#2f353b" stroke-width="1.1"/><path d="M0.6 10.8V5Q0.6 4.2 1.4 4.2H7.4L8.2 3.4H14Q14.7 3.4 14.7 4.1V10.8Q14.7 11.6 13.9 11.6H1.4Q0.6 11.6 0.6 10.8Z" fill="url(#tfg)" stroke="#2f353b" stroke-width="1.1"/></svg>
<div class="t" style="left:66px;top:476.23px;font-size:12px;line-height:14px;color:#000;font-weight:normal;max-width:407px;overflow:hidden">Справочники</div>
<svg style="left:30px;top:498px" width="9" height="9" viewBox="0 0 9 9"><defs></defs><rect x="0.5" y="0.5" width="8" height="8" fill="url(#exg)" stroke="#969696" rx="1"/><path d="M2 4.5h5" stroke="#2a3c8c" stroke-width="1"/><path d="M4.5 2v5" stroke="#2a3c8c" stroke-width="1"/></svg>
<svg style="left:45px;top:493px" width="17" height="17" viewBox="0 0 17 17"><path d="M11 3.5Q9.5 3.5 9.5 5V8.5L8.5 9.5 9.5 10.5V14Q9.5 15.5 11 15.5" fill="none" stroke="#b0905a" stroke-width="1"/><rect x="12.5" y="1" width="3" height="3" fill="#111"/><rect x="12.5" y="8" width="3" height="3" fill="#111"/><rect x="12.5" y="14.5" width="3" height="3" fill="#111"/><rect x="3.5" y="3.5" width="2.5" height="2.5" fill="#111"/><circle cx="5.5" cy="11" r="3" fill="#f2c8a8"/><path d="M2.5 10.5Q2.5 7 5.5 7T8.5 10Q7 9 5.5 9.5T2.5 10.5Z" fill="#6a4020"/><path d="M0.5 17V16Q0.5 13.5 3 13.5H8Q10.5 13.5 10.5 16V17Z" fill="#1a5ad8"/><path d="M5.5 13.5V17" stroke="#e03030" stroke-width="1.2"/></svg>
<div class="t" style="left:66px;top:494.23px;font-size:12px;line-height:14px;color:#000;font-weight:normal;max-width:407px;overflow:hidden">Структура предприятия</div>
<svg style="left:30px;top:516px" width="9" height="9" viewBox="0 0 9 9"><defs></defs><rect x="0.5" y="0.5" width="8" height="8" fill="url(#exg)" stroke="#969696" rx="1"/><path d="M2 4.5h5" stroke="#2a3c8c" stroke-width="1"/><path d="M4.5 2v5" stroke="#2a3c8c" stroke-width="1"/></svg>
<svg style="left:45px;top:511px" width="17" height="15" viewBox="0 0 17 15"><rect x="0.6" y="4.6" width="11.8" height="9.8" fill="#eaf2fb" stroke="#7a8ca8" stroke-width="1"/><path d="M2.5 9.5h3M6.5 9.5h4M2.5 12h3M6.5 12h4" stroke="#4a88d0" stroke-width="1"/><path d="M4 5.5L8.5 0.8 15 1.5 13.5 6.5 8 7Z" fill="#f0c040" stroke="#8a6a10" stroke-width="0.6"/><path d="M5.5 5L9.5 1M7.5 6L11 2M6 2.5l4 4M9 1.5l3.5 4" stroke="#b08a20" stroke-width="0.6"/><path d="M15 0.5h1.5v5H15z" fill="#2aa030"/></svg>
<div class="t" style="left:66px;top:512.23px;font-size:12px;line-height:14px;color:#000;font-weight:normal;max-width:407px;overflow:hidden">Отчеты</div>
<svg style="left:30px;top:534px" width="9" height="9" viewBox="0 0 9 9"><defs></defs><rect x="0.5" y="0.5" width="8" height="8" fill="url(#exg)" stroke="#969696" rx="1"/><path d="M2 4.5h5" stroke="#2a3c8c" stroke-width="1"/><path d="M4.5 2v5" stroke="#2a3c8c" stroke-width="1"/></svg>
<svg style="left:45px;top:530px" width="17" height="17" viewBox="0 0 17 17"><path d="M0.6 3V13.4H13.4V5H7L5.5 3Z" fill="#fbe39a" stroke="#a07800" stroke-width="1"/><path d="M1.5 6.5H14.4V13.4H1.5Z" fill="#fff0b8" stroke="#a07800" stroke-width="0.8"/><path d="M5.5 7.5L8 10 5.5 12.5 3 10Z" fill="#ffff40" stroke="#5a5000" stroke-width="0.9"/><rect x="8.5" y="10.5" width="3.5" height="3" fill="#ffff20" stroke="#5a5000" stroke-width="0.8"/><rect x="11.5" y="13.5" width="4" height="3" fill="#ffff20" stroke="#5a5000" stroke-width="0.8"/><rect x="8.5" y="13.5" width="3" height="3" fill="#ffff20" stroke="#5a5000" stroke-width="0.8"/></svg>
<div class="t" style="left:66px;top:530.23px;font-size:12px;line-height:14px;color:#000;font-weight:normal;max-width:407px;overflow:hidden">Шаблоны</div>
<svg style="left:11px;top:552px" width="9" height="9" viewBox="0 0 9 9"><defs></defs><rect x="0.5" y="0.5" width="8" height="8" fill="url(#exg)" stroke="#969696" rx="1"/><path d="M2 4.5h5" stroke="#2a3c8c" stroke-width="1"/><path d="M4.5 2v5" stroke="#2a3c8c" stroke-width="1"/></svg>
<svg style="left:27px;top:547px" width="14" height="17" viewBox="0 0 14 17"><rect x="0.6" y="0.6" width="6.8" height="3.6" fill="#fff" stroke="#1a1a1a" stroke-width="1.1"/><path d="M3.5 4.5V15" stroke="#1a1a1a" stroke-width="1" stroke-dasharray="1 1"/><path d="M4 7h4.5M4 15h4.5" stroke="#1a1a1a" stroke-width="1" stroke-dasharray="1 1"/><path d="M4 11h5" stroke="#1a8ae8" stroke-width="1.2"/><rect x="9" y="5.8" width="4.2" height="2.4" rx="1" fill="#fff" stroke="#1a1a1a" stroke-width="1"/><rect x="9" y="9.8" width="4.2" height="2.4" rx="1" fill="#fff" stroke="#1a8ae8" stroke-width="1.1"/><rect x="9" y="13.8" width="4.2" height="2.4" rx="1" fill="#fff" stroke="#1a1a1a" stroke-width="1"/></svg>
<div class="t" style="left:47px;top:548.23px;font-size:12px;line-height:14px;color:#000;font-weight:normal;max-width:426px;overflow:hidden">Классификаторы</div>
<svg style="left:11px;top:570px" width="9" height="9" viewBox="0 0 9 9"><defs></defs><rect x="0.5" y="0.5" width="8" height="8" fill="url(#exg)" stroke="#969696" rx="1"/><path d="M2 4.5h5" stroke="#2a3c8c" stroke-width="1"/><path d="M4.5 2v5" stroke="#2a3c8c" stroke-width="1"/></svg>
<svg style="left:26px;top:568px" width="16" height="12" viewBox="0 0 16 12"><rect x="0.7" y="0.7" width="14.2" height="9.8" fill="#e4e7eb" stroke="#20262c" stroke-width="1.3"/><path d="M0.7 0.7l7.1 5.6 7.1-5.6M0.7 10.5l5-4.4M14.9 10.5l-5-4.4" fill="none" stroke="#20262c" stroke-width="1"/></svg>
<div class="t" style="left:47px;top:566.23px;font-size:12px;line-height:14px;color:#000;font-weight:normal;max-width:426px;overflow:hidden">Почта (Орлова Ольга Петровна)</div>
<svg style="left:11px;top:588px" width="9" height="9" viewBox="0 0 9 9"><defs></defs><rect x="0.5" y="0.5" width="8" height="8" fill="url(#exg)" stroke="#969696" rx="1"/><path d="M2 4.5h5" stroke="#2a3c8c" stroke-width="1"/><path d="M4.5 2v5" stroke="#2a3c8c" stroke-width="1"/></svg>
<svg style="left:27px;top:584px" width="15" height="15" viewBox="0 0 15 15"><path d="M4.8 4.6Q4.8 1 7.3 1T9.8 4.6Q9.8 7.8 7.3 7.8T4.8 4.6Z" fill="#e8eaec" stroke="#2a2f34" stroke-width="1.1"/><path d="M0.6 11.8Q0.6 8.2 5 8.2H9.6Q14 8.2 14 11.8Q14 12.6 13.2 12.6H1.4Q0.6 12.6 0.6 11.8Z" fill="#e8eaec" stroke="#2a2f34" stroke-width="1.1"/></svg>
<div class="t" style="left:47px;top:584.23px;font-size:12px;line-height:14px;color:#000;font-weight:normal;max-width:426px;overflow:hidden">Пользователи</div>
<svg style="left:0;top:0" width="1" height="1"><defs><linearGradient id="exg" x1="0" y1="0" x2="0" y2="1"><stop offset="0" stop-color="#fff"/><stop offset="1" stop-color="#e4e4e4"/></linearGradient></defs></svg>
<div class="a" style="left:479px;top:92px;width:898px;height:621px;background:#f0f0f0"></div>
<div class="a" style="left:479px;top:92px;width:898px;height:19px;background:#f0f0f0"></div>
<svg style="left:479px;top:92px" width="130" height="20" viewBox="0 0 130 20">
<path d="M5 19.5L22 2.5H117.5Q121.5 2.5 121.5 6.5V19.5" fill="#fff" stroke="#8c8c8c" stroke-width="1"/>
</svg>
<div class="t" style="left:506px;top:96.86px;font-size:11px;line-height:13px;color:#000;font-weight:bold;letter-spacing:-0.15px">Окно состава</div>
<svg style="left:587px;top:99px" width="9" height="9" viewBox="0 0 9 9"><path d="M0.6 0.6L8.4 8.4M8.4 0.6L0.6 8.4" stroke="#000" stroke-width="1.6"/></svg>
<svg style="left:1361px;top:100px" width="10" height="5" viewBox="0 0 10 5"><path d="M0 0H10L5 5Z" fill="#000"/></svg>
<div class="a" style="left:479px;top:111px;width:898px;height:38px;background:linear-gradient(#ffffff 0%,#fdfdfd 30%,#e0e0e0 62%,#bdbdbd 100%)"></div>
<div class="a" style="left:529px;top:118px;width:1px;height:27px;background:linear-gradient(rgba(208,208,208,0),#d2d2d2 15%,#d2d2d2 85%,rgba(208,208,208,0))"></div>
<div class="a" style="left:611px;top:118px;width:1px;height:27px;background:linear-gradient(rgba(208,208,208,0),#d2d2d2 15%,#d2d2d2 85%,rgba(208,208,208,0))"></div>
<div class="a" style="left:615px;top:112px;width:37px;height:36px;background:#cde4f7;border:1px solid #0078d7"></div>
<svg style="left:496px;top:119px" width="20" height="21" viewBox="0 0 20 21"><defs><linearGradient id="ua" x1="0" y1="0" x2="0" y2="1"><stop offset="0" stop-color="#fff"/><stop offset="1" stop-color="#cfe4f8"/></linearGradient></defs><path d="M10 0.8L19 10H14V20H6V10H1Z" fill="url(#ua)" stroke="#1a78d0" stroke-width="1.4" stroke-linejoin="round"/></svg>
<svg style="left:539px;top:118px" width="25" height="24" viewBox="0 0 25 24"><rect x="0.6" y="0.6" width="9" height="4" fill="#fff" stroke="#333" stroke-width="1.1"/><path d="M4 5v16M4 12h5M4 20.5h5" stroke="#444" stroke-width="1" stroke-dasharray="1 1"/><rect x="11" y="7" width="5" height="2.5" fill="#fff" stroke="#444" stroke-width="0.8"/><rect x="11" y="19" width="5" height="2.5" fill="#fff" stroke="#444" stroke-width="0.8"/><circle cx="13.5" cy="14.5" r="4.3" fill="#e6e6e6" stroke="#444" stroke-width="1.2"/><path d="M12 14.5h3" stroke="#444" stroke-width="1"/><path d="M16.5 17.5l5 5" stroke="#444" stroke-width="2.2"/></svg>
<svg style="left:577px;top:119px" width="22" height="22" viewBox="0 0 22 22"><path d="M1 6h3.5a2.5 2.5 0 1 1 5 0H13v5h-2a2 2 0 1 0 0 4h2v5H1v-5h2a2 2 0 1 0 0-4H1z" fill="#e8ebef" stroke="#333" stroke-width="1.1"/><path d="M14 4a4 4 0 0 1 4 4" fill="none" stroke="#333" stroke-width="1"/><path d="M16 7l2 2 2-2" fill="#333"/><rect x="10" y="11" width="11" height="11" rx="1.5" fill="#2bb02b" stroke="#1b801b" stroke-width="0.8"/><path d="M12.5 13.5l6 6M18.5 13.5l-6 6" stroke="#fff" stroke-width="2"/></svg>
<svg style="left:623px;top:121px" width="20" height="17" viewBox="0 0 20 17"><defs><linearGradient id="fl" x1="0" y1="0" x2="1" y2="0"><stop offset="0" stop-color="#2a2e33"/><stop offset="0.5" stop-color="#6a7077"/><stop offset="1" stop-color="#2a2e33"/></linearGradient></defs><path d="M0.5 0.5H18.5L11.5 8V16.5L8 15.5V8Z" fill="url(#fl)" stroke="#2a2e33" stroke-width="0.8"/></svg>
<svg style="left:661px;top:123px" width="20" height="18" viewBox="0 0 20 18"><path d="M0 1h13M0 5h13M0 9h9M0 13h9" stroke="#bdbdbd" stroke-width="2"/><path d="M10 8l8 8M18 8l-8 8" stroke="#c8c8c8" stroke-width="2.5"/></svg>
<svg style="left:699px;top:121px" width="20" height="19" viewBox="0 0 20 19"><rect x="0.6" y="4.6" width="13" height="12" fill="#fff" stroke="#1a6fd0" stroke-width="1.2"/><rect x="0.6" y="4.6" width="13" height="3" fill="#1a6fd0"/><path d="M2.5 10h9M2.5 12.5h9M2.5 15h9M4.5 8v8" stroke="#1a6fd0" stroke-width="0.9"/><path d="M2 0.5H19L12.5 7.5V18L9 16.5V7.5Z" fill="url(#fl)" stroke="#2a2e33" stroke-width="0.8"/></svg>
<div class="a" style="left:479px;top:149px;width:898px;height:203px;background:#fff;border:1px solid #828790"></div>
<div class="a" style="left:481px;top:151px;width:871px;height:43px;border:1px solid #a0a0a0;border-right-color:#dcdcdc;border-bottom-color:#a0a0a0"></div>
<div class="a" style="left:1140px;top:152px;width:1px;height:41px;background:linear-gradient(#e8e8e8 45%,#a0a0a0 47%)"></div>
<div class="a" style="left:1233px;top:152px;width:1px;height:41px;background:linear-gradient(#e8e8e8 45%,#a0a0a0 47%)"></div>
<div class="t" style="left:487px;top:155.83px;font-size:12px;line-height:14px;color:#000;font-weight:normal;">Описание</div>
<div class="t" style="left:1146px;top:155.83px;font-size:12px;line-height:14px;color:#000;font-weight:normal;">Статус</div>
<div class="t" style="left:1238px;top:155.83px;font-size:12px;line-height:14px;color:#000;font-weight:normal;">Дата модификации</div>
<div class="t" style="left:492px;top:175.80px;font-size:11.2px;line-height:13px;color:#6d6d6d;font-weight:normal;">Введите текст</div>
<div class="t" style="left:1151px;top:175.80px;font-size:11.2px;line-height:13px;color:#6d6d6d;font-weight:normal;max-width:60px;overflow:hidden">Введите текст</div>
<div class="t" style="left:1243px;top:175.80px;font-size:11.2px;line-height:13px;color:#6d6d6d;font-weight:normal;">Введите текст</div>
<div class="a" style="left:1125px;top:174px;width:13px;height:17px;background:#efefef"></div>
<div class="a" style="left:1138px;top:173px;width:1px;height:19px;background:#a0a0a0"></div>
<div class="a" style="left:1124px;top:191px;width:15px;height:1px;background:#a0a0a0"></div>
<svg style="left:1128px;top:181px" width="7" height="3" viewBox="0 0 7 3"><path d="M0 0H7L4.5 3H2.5Z" fill="#000"/></svg>
<div class="a" style="left:1217px;top:174px;width:13px;height:17px;background:#efefef"></div>
<div class="a" style="left:1230px;top:173px;width:1px;height:19px;background:#a0a0a0"></div>
<div class="a" style="left:1216px;top:191px;width:15px;height:1px;background:#a0a0a0"></div>
<svg style="left:1220px;top:181px" width="7" height="3" viewBox="0 0 7 3"><path d="M0 0H7L4.5 3H2.5Z" fill="#000"/></svg>
<div class="a" style="left:1335px;top:174px;width:13px;height:17px;background:#efefef"></div>
<div class="a" style="left:1348px;top:173px;width:1px;height:19px;background:#a0a0a0"></div>
<div class="a" style="left:1334px;top:191px;width:15px;height:1px;background:#a0a0a0"></div>
<svg style="left:1338px;top:181px" width="7" height="3" viewBox="0 0 7 3"><path d="M0 0H7L4.5 3H2.5Z" fill="#000"/></svg>
<div class="a" style="left:479px;top:356px;width:898px;height:19px;background:#bdbdbd;border:1px solid #a6a6a6"></div>
<div class="t" style="left:484px;top:359.66px;font-size:11px;line-height:13px;color:#fff;font-weight:normal;">Свойства</div>
<svg style="left:1329px;top:364px" width="10" height="6" viewBox="0 0 10 6"><path d="M0 0H10L5 5.5Z" fill="#fff"/></svg>
<svg style="left:1347px;top:362px" width="8" height="9" viewBox="0 0 8 9"><path d="M1.5 0.6H6.4V5M1.5 0.6V5" stroke="#fff" stroke-width="1.2" fill="none"/><path d="M5 0.6V5" stroke="#fff" stroke-width="1" fill="none"/><path d="M0 5.6H7.5M3.7 5.6V8.5" stroke="#fff" stroke-width="1.1" fill="none"/></svg>
<svg style="left:1363px;top:362px" width="9" height="8" viewBox="0 0 9 8"><path d="M0.5 0L8.5 8M8.5 0L0.5 8" stroke="#fff" stroke-width="1.2"/></svg>
<div class="a" style="left:479px;top:375px;width:898px;height:1px;background:#e9e9e9"></div>
<div class="a" style="left:479px;top:376px;width:896px;height:21px;background:#808080"></div>
<svg style="left:485px;top:380px" width="12" height="13" viewBox="0 0 12 13"><rect x="0.6" y="1.6" width="10.8" height="10.8" fill="#fff" stroke="#111" stroke-width="1.2"/><path d="M3 0v3M6 0v3M9 0v3" stroke="#111" stroke-width="1"/><path d="M2.5 5h7M2.5 7.5h7M2.5 10h7" stroke="#111" stroke-width="1.1"/></svg>
<div class="t" style="left:503px;top:379.47px;font-size:11.6px;line-height:13px;color:#fff;font-weight:bold;text-decoration:underline">Этап договора - Этап №2 черновика договора «Договор ген. подряда» от 03.03.2026</div>
<div class="t" style="left:1282px;top:380.03px;font-size:12px;line-height:14px;color:#fff;font-weight:normal;">Черновик</div>
<svg style="left:1344px;top:380px" width="15" height="14" viewBox="0 0 15 14"><path d="M5.5 1.5H13.5Q14.5 1.5 14.5 2.5Q14.5 3.5 13.5 3.5H12.2V11.5" fill="#fff" stroke="#1a1a1a" stroke-width="1.1"/><path d="M4.6 1.6H12.2V12.4L10.5 12.9H4.6Z" fill="#fff" stroke="#1a1a1a" stroke-width="1.1"/><path d="M6.5 4.5H10.5M6.5 6.5H10.5M6.5 8.5H10.5M6.5 10.5H10.5" stroke="#1a1a1a" stroke-width="1.1"/><path d="M4.6 10.8H1.6Q0.6 10.8 0.6 11.9Q0.6 13 1.6 13H10.5" fill="#fff" stroke="#1a1a1a" stroke-width="1.1"/><path d="M11 12h1.5v1.5" fill="#ccc"/></svg>
<svg style="left:1364px;top:387px" width="7" height="4" viewBox="0 0 7 4"><path d="M0 0H7L3.5 4Z" fill="#fff"/></svg>
<div class="a" style="left:479px;top:397px;width:1px;height:316px;background:#a0a0a0"></div>
<div class="a" style="left:484px;top:401px;width:853px;height:1px;background:#a0a0a0"></div>
<div class="a" style="left:1346px;top:401px;width:26px;height:22px;background:#cce8ff;border:1px solid #99d1ff;border-radius:3px"></div>
<svg style="left:1352px;top:404px" width="16" height="16" viewBox="0 0 16 16"><rect x="0.7" y="0.7" width="14" height="14.3" fill="#f8f9fa" stroke="#1e1e1e" stroke-width="1.3"/><rect x="1.5" y="1.5" width="12.5" height="2" fill="#d0d4d8"/><rect x="3" y="4.8" width="9.5" height="3" fill="#60666c"/><rect x="3" y="8.8" width="9.5" height="3" fill="#1a6fd0"/><rect x="10.3" y="5.8" width="1.2" height="1" fill="#fff"/><rect x="10.3" y="9.8" width="1.2" height="1" fill="#fff"/></svg>
<svg style="left:1351px;top:427px" width="16" height="16" viewBox="0 0 16 16"><circle cx="6.3" cy="6.3" r="5.3" fill="#dfe5ea" stroke="#2c3236" stroke-width="1.3"/><path d="M10 10L14.3 14.3" stroke="#2c3236" stroke-width="2.6" stroke-linecap="round"/></svg>
<svg style="left:1351px;top:451px" width="16" height="9" viewBox="0 0 16 9"><path d="M6 1H3Q0.8 1 0.8 4.5T3 8H6M10 1H13Q15.2 1 15.2 4.5T13 8H10" fill="none" stroke="#2c3236" stroke-width="1.5"/><path d="M2.5 3.3H13.5V5.7H2.5Z" fill="#fff" stroke="#2c3236" stroke-width="1"/></svg>
<svg style="left:1353px;top:472px" width="15" height="14" viewBox="0 0 15 14"><circle cx="4" cy="4" r="3.3" fill="#d8d8d8" stroke="#3a3a3a" stroke-width="1.2"/><path d="M3 7V12.5L4.5 11.5" fill="none" stroke="#3a3a3a" stroke-width="1.4"/><circle cx="6.5" cy="5.5" r="3.6" fill="#ffcc22" stroke="#c08000" stroke-width="0.9"/><circle cx="6" cy="5" r="1" fill="#fff3b0"/><path d="M8.5 8L13.5 12.8M11 10.5L12.5 9M12.7 12.3L14 11" stroke="#f0a800" stroke-width="1.8"/></svg>
<svg style="left:1352px;top:492px" width="15" height="15" viewBox="0 0 15 15"><path d="M1.5 12.5L3.5 7 9.5 1 13.5 5 7.5 11Z" fill="#2c3236"/><path d="M3.5 7L9.5 1M7 4.5L10.5 8" stroke="#6a7076" stroke-width="0.7"/><circle cx="6.5" cy="8.5" r="1.2" fill="#fff"/><path d="M1.5 12.5L6 8.3" stroke="#fff" stroke-width="0.6"/><path d="M1.5 14.3H14.2" stroke="#2c3236" stroke-width="1.3"/></svg>
<svg style="left:1350px;top:514px" width="17" height="15" viewBox="0 0 17 15"><path d="M0.7 3.2Q0.7 0.7 3 0.7V14.3H0.7Z" fill="#fff" stroke="#2c3236" stroke-width="1.2"/><path d="M3 14.3V3.2Q3 0.7 5.5 0.7H7V14.3Z" fill="#fff" stroke="#2c3236" stroke-width="1.2"/><path d="M7 14.3V3.2Q7 0.7 9.5 0.7H11V14.3Z" fill="#fff" stroke="#2c3236" stroke-width="1.2"/><path d="M11 14.3V3.2Q11 0.7 13.5 0.7H16.3V11.8Q16.3 14.3 14 14.3Z" fill="#b8d8f8" stroke="#1a6fd0" stroke-width="1.2"/><path d="M4.5 4V13M8.5 4V13" stroke="#8a9096" stroke-width="0.8"/></svg>
<svg style="left:1350px;top:537px" width="17" height="16" viewBox="0 0 17 16"><path d="M1.5 4V1.5Q1.5 0.7 2.3 0.7H7L8 1.7H12.5Q13.3 1.7 13.3 2.5V4" fill="#f6f7f9" stroke="#2f353b" stroke-width="1.1"/><path d="M0.6 13V5Q0.6 4.2 1.4 4.2H7.2L8 3.4H14.2Q15 3.4 15 4.2V13Q15 13.8 14.2 13.8H1.4Q0.6 13.8 0.6 13Z" fill="url(#tfg)" stroke="#2f353b" stroke-width="1.1"/><circle cx="11.3" cy="11" r="3.3" fill="#fff" stroke="#1a62d8" stroke-width="1.8" stroke-dasharray="1.3 1"/><circle cx="11.3" cy="11" r="3.8" fill="none" stroke="#1a62d8" stroke-width="1" stroke-dasharray="1 1.2"/><circle cx="11.3" cy="11" r="1.1" fill="#1a62d8"/></svg>
<div class="t" style="left:497px;top:415.17px;font-size:11.6px;line-height:13px;color:#000;font-weight:bold;">Номер этапа</div>
<div class="a" style="left:594px;top:416px;width:79px;height:19px;background:#f0f0f0;border-top:1px solid #fafafa;border-left:1px solid #fafafa;border-bottom:1px solid #8a8a8a;border-right:1px solid #e6e6e6"></div>
<div class="t" style="left:599px;top:418.86px;font-size:11px;line-height:13px;color:#000;font-weight:normal;">2</div>
<div class="t" style="left:497px;top:442.00px;font-size:10.6px;line-height:12px;color:#000;font-weight:normal;">Наименование</div>
<div class="a" style="left:594px;top:442px;width:547px;height:18px;background:#f0f0f0;border-top:1px solid #fafafa;border-left:1px solid #fafafa;border-bottom:1px solid #8a8a8a;border-right:1px solid #e6e6e6"></div>
<div class="t" style="left:598px;top:443.86px;font-size:11px;line-height:13px;color:#000;font-weight:normal;">Наименование второго этапа</div>
<div class="a" style="left:486px;top:476px;width:389px;height:97px;border:1px solid #dcdcdc"></div>
<div class="a" style="left:877px;top:476px;width:381px;height:97px;border:1px solid #dcdcdc"></div>
<div class="a" style="left:491px;top:470px;width:182px;height:12px;background:#f0f0f0"></div>
<div class="a" style="left:882px;top:470px;width:186px;height:12px;background:#f0f0f0"></div>
<div class="t" style="left:494px;top:470.56px;font-size:11px;line-height:13px;color:#000;font-weight:normal;">Сроки выполнения работ по плану</div>
<div class="t" style="left:886px;top:470.56px;font-size:11px;line-height:13px;color:#000;font-weight:normal;">Сроки выполнения работ по факту</div>
<div class="t" style="left:494px;top:490.66px;font-size:11px;line-height:13px;color:#000;font-weight:normal;">Дата начала работ</div>
<div class="t" style="left:494px;top:515.26px;font-size:11px;line-height:13px;color:#000;font-weight:normal;">Дата окончания работ</div>
<div class="t" style="left:494px;top:548.16px;font-size:11px;line-height:13px;color:#000;font-weight:normal;">Длительность, к.дн.</div>
<div class="a" style="left:623px;top:488px;width:223px;height:18px;background:#f0f0f0;border-top:1px solid #fafafa;border-left:1px solid #fafafa;border-bottom:1px solid #8a8a8a;border-right:1px solid #e6e6e6"></div>
<div class="t" style="left:628.5px;top:490.46px;font-size:11px;line-height:13px;color:#000;font-weight:normal;">10.04.2026 09:00:00</div>
<div class="a" style="left:623px;top:512px;width:223px;height:18px;background:#f0f0f0;border-top:1px solid #fafafa;border-left:1px solid #fafafa;border-bottom:1px solid #8a8a8a;border-right:1px solid #e6e6e6"></div>
<div class="t" style="left:627.5px;top:514.46px;font-size:11px;line-height:13px;color:#000;font-weight:normal;">02.06.2026 18:00:00</div>
<div class="a" style="left:623px;top:546px;width:110px;height:18px;background:#f0f0f0;border-top:1px solid #fafafa;border-left:1px solid #fafafa;border-bottom:1px solid #8a8a8a;border-right:1px solid #e6e6e6"></div>
<div class="t" style="left:628.5px;top:548.46px;font-size:11px;line-height:13px;color:#000;font-weight:normal;">54</div>
<div class="t" style="left:892px;top:490.36px;font-size:11px;line-height:13px;color:#000;font-weight:normal;">Дата начала работ</div>
<div class="t" style="left:892px;top:515.16px;font-size:11px;line-height:13px;color:#000;font-weight:normal;">Дата окончания работ</div>
<div class="a" style="left:1020px;top:488px;width:223px;height:18px;background:#f0f0f0;border-top:1px solid #fafafa;border-left:1px solid #fafafa;border-bottom:1px solid #8a8a8a;border-right:1px solid #e6e6e6"></div>
<div class="a" style="left:1020px;top:512px;width:223px;height:18px;background:#f0f0f0;border-top:1px solid #fafafa;border-left:1px solid #fafafa;border-bottom:1px solid #8a8a8a;border-right:1px solid #e6e6e6"></div>
<div class="t" style="left:488px;top:583.00px;font-size:10.6px;line-height:12px;color:#000;font-weight:normal;">Сумма</div>
<div class="a" style="left:630px;top:582px;width:208px;height:18px;background:#f0f0f0;border-top:1px solid #fafafa;border-left:1px solid #fafafa;border-bottom:1px solid #8a8a8a;border-right:1px solid #e6e6e6"></div>
<div class="t" style="left:635px;top:583.86px;font-size:11px;line-height:13px;color:#000;font-weight:normal;">500 000.00</div>
<div class="t" style="left:488px;top:608.70px;font-size:10.6px;line-height:12px;color:#000;font-weight:normal;">Сумма НДС</div>
<div class="a" style="left:630px;top:607px;width:208px;height:18px;background:#f0f0f0;border-top:1px solid #fafafa;border-left:1px solid #fafafa;border-bottom:1px solid #8a8a8a;border-right:1px solid #e6e6e6"></div>
<div class="t" style="left:491px;top:634.10px;font-size:10.6px;line-height:12px;color:#000;font-weight:normal;">Ссылка для связи с внешними приложениями</div>
<div class="a" style="left:750px;top:633px;width:208px;height:18px;background:#f0f0f0;border-top:1px solid #fafafa;border-left:1px solid #fafafa;border-bottom:1px solid #8a8a8a;border-right:1px solid #e6e6e6"></div>
<svg style="left:0;top:0" width="1379" height="737" viewBox="0 0 1379 737">
<path d="M484.5 401.5V688" stroke="#a0a0a0" stroke-width="1" fill="none"/>
<rect x="486" y="688" width="112" height="21" fill="#fff"/>
<path d="M488 708.5H596.5L598.5 706.5" stroke="#8a8a8a" stroke-width="1" fill="none"/>
<path d="M598 688.5H1338" stroke="#ffffff" stroke-width="1"/>
<path d="M598 689.5H1338" stroke="#a0a0a0" stroke-width="1"/>
<path d="M598.5 689V705.5" stroke="#7a7a7a" stroke-width="1"/>
<path d="M600 706.5H754L756.5 704V690" stroke="#a0a0a0" stroke-width="1" fill="none"/>
<path d="M757.5 690V705.5" stroke="#a0a0a0" stroke-width="1"/>
<path d="M760 706.5H802L804.5 704V690" stroke="#a0a0a0" stroke-width="1" fill="none"/>
<path d="M805.5 690V705.5" stroke="#a0a0a0" stroke-width="1"/>
<path d="M808 706.5H898.5L901 704V690" stroke="#a0a0a0" stroke-width="1" fill="none"/>
<path d="M1337.5 401V689" stroke="#fff" stroke-width="1"/>
<path d="M1376.5 92V111M1376.5 149V712.5M479.5 92V111M479 92.5H1377" stroke="#a0a0a0" stroke-width="1"/><path d="M480.5 93V111M480 93.5H1376" stroke="#fff" stroke-width="1"/>
<path d="M1341.5 402V708" stroke="#a0a0a0" stroke-width="1"/>
<path d="M1342.5 402V708" stroke="#fff" stroke-width="1"/>
<path d="M1358.5 715V733M696.5 715V733M1114.5 715V733" stroke="#d2d2d2" stroke-width="1"/>
</svg>
<div class="t" style="left:495px;top:692.63px;font-size:12px;line-height:14px;color:#000;font-weight:bold;letter-spacing:0.5px">Карточка этапа</div>
<div class="t" style="left:610px;top:691.83px;font-size:12px;line-height:14px;color:#000;font-weight:normal;">Прикреплённые файлы</div>
<div class="t" style="left:766px;top:691.83px;font-size:12px;line-height:14px;color:#000;font-weight:normal;">Связи</div>
<div class="t" style="left:816px;top:691.83px;font-size:12px;line-height:14px;color:#000;font-weight:normal;">Комментарии</div>
<div class="a" style="left:1372px;top:725px;width:2px;height:2px;background:#b0b0b0"></div>
<div class="a" style="left:1369px;top:728px;width:2px;height:2px;background:#b0b0b0"></div>
<div class="a" style="left:1372px;top:728px;width:2px;height:2px;background:#b0b0b0"></div>
<div class="a" style="left:1366px;top:731px;width:2px;height:2px;background:#b0b0b0"></div>
<div class="a" style="left:1369px;top:731px;width:2px;height:2px;background:#b0b0b0"></div>
<div class="a" style="left:1372px;top:731px;width:2px;height:2px;background:#b0b0b0"></div>
<div class="a" style="left:479px;top:712px;width:898px;height:1px;background:#a0a0a0"></div>
</body></html>
